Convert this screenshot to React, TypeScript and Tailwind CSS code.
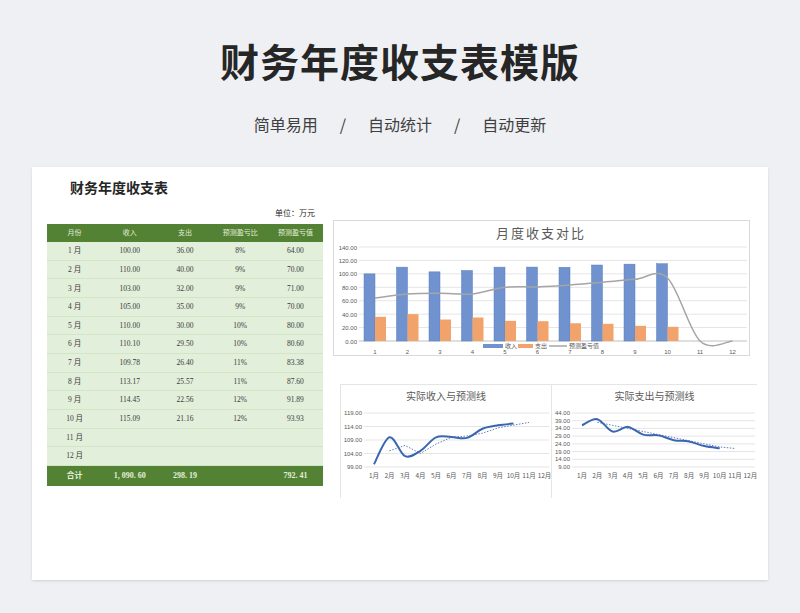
import React from "react";

const rows = [
  ["1 月", "100.00", "36.00", "8%", "64.00"],
  ["2 月", "110.00", "40.00", "9%", "70.00"],
  ["3 月", "103.00", "32.00", "9%", "71.00"],
  ["4 月", "105.00", "35.00", "9%", "70.00"],
  ["5 月", "110.00", "30.00", "10%", "80.00"],
  ["6 月", "110.10", "29.50", "10%", "80.60"],
  ["7 月", "109.78", "26.40", "11%", "83.38"],
  ["8 月", "113.17", "25.57", "11%", "87.60"],
  ["9 月", "114.45", "22.56", "12%", "91.89"],
  ["10 月", "115.09", "21.16", "12%", "93.93"],
  ["11 月", "", "", "", ""],
  ["12 月", "", "", "", ""],
];
const inc = [100, 110, 103, 105, 110, 110.1, 109.78, 113.17, 114.45, 115.09];
const exp = [36, 40, 32, 35, 30, 29.5, 26.4, 25.57, 22.56, 21.16];
const prof = [64, 70, 71, 70, 80, 80.6, 83.38, 87.6, 91.89, 93.93];

function smooth(pts: [number, number][]) {
  let d = `M${pts[0][0]},${pts[0][1]}`;
  for (let i = 0; i < pts.length - 1; i++) {
    const p0 = pts[i - 1] || pts[i], p1 = pts[i], p2 = pts[i + 1], p3 = pts[i + 2] || p2;
    const c1x = p1[0] + (p2[0] - p0[0]) / 6, c1y = p1[1] + (p2[1] - p0[1]) / 6;
    const c2x = p2[0] - (p3[0] - p1[0]) / 6, c2y = p2[1] - (p3[1] - p1[1]) / 6;
    d += ` C${c1x},${c1y} ${c2x},${c2y} ${p2[0]},${p2[1]}`;
  }
  return d;
}

const serif = { fontFamily: '"Liberation Serif","Noto Sans CJK SC",serif' };

function BarChart() {
  const y0 = 121, k = 94 / 140, cx = (i: number) => 42 + i * 32.5;
  const yy = (v: number) => y0 - v * k;
  const pp: [number, number][] = prof.map((v, i) => [cx(i), yy(v)]);
  pp.push([cx(10), y0], [cx(11), y0]);
  return (
    <svg width="417" height="136" className="block">
      <rect x="0.5" y="0.5" width="416" height="135" fill="#fff" stroke="#d9d9d9" />
      <text x="208" y="18" textAnchor="middle" fontSize="13" fill="#595959" letterSpacing="2" fontFamily="Noto Sans CJK SC,sans-serif">月度收支对比</text>
      {[0, 20, 40, 60, 80, 100, 120, 140].map((v) => (
        <g key={v}>
          <line x1="26" x2="414" y1={yy(v)} y2={yy(v)} stroke={v === 0 ? "#bfbfbf" : "#e5e5e5"} />
          <text x="24" y={yy(v) + 2.5} fontSize="6" textAnchor="end" fill="#595959" fontFamily="Liberation Sans,sans-serif">{v.toFixed(2)}</text>
        </g>
      ))}
      {inc.map((v, i) => (
        <rect key={"i" + i} x={cx(i) - 11} y={yy(v)} width="11" height={v * k} fill="#7092ce" stroke="#5b7fbf" strokeWidth="0.5" />
      ))}
      {exp.map((v, i) => (
        <rect key={"e" + i} x={cx(i)} y={yy(v)} width="11" height={v * k} fill="#f2a36b" />
      ))}
      <path d={smooth(pp)} fill="none" stroke="#a5a5a5" strokeWidth="1.5" />
      {Array.from({ length: 12 }).map((_, i) => (
        <text key={i} x={cx(i)} y="134" fontSize="6" textAnchor="middle" fill="#595959" fontFamily="Liberation Sans,sans-serif">{i + 1}</text>
      ))}
      <rect x="150" y="124" width="20" height="4" fill="#7092ce" />
      <text x="172" y="128" fontSize="6" fill="#595959">收入</text>
      <rect x="185" y="124" width="15" height="4" fill="#f2a36b" />
      <text x="202" y="128" fontSize="6" fill="#595959">支出</text>
      <line x1="216" x2="234" y1="126" y2="126" stroke="#a5a5a5" strokeWidth="1.5" />
      <text x="236" y="128" fontSize="6" fill="#595959">预测盈亏值</text>
    </svg>
  );
}

function LineChart({ title, data, trend, min, max, step, x0, dx, w }: any) {
  const top = 28, bot = 82;
  const yy = (v: number) => bot - ((v - min) / (max - min)) * (bot - top);
  const ticks: number[] = [];
  for (let v = min; v <= max + 0.01; v += step) ticks.push(v);
  const pts: [number, number][] = data.map((v: number, i: number) => [x0 + i * dx, yy(v)]);
  const tp = trend.map((v: number, i: number) => `${x0 + (i + 1) * dx},${yy(v)}`).join(" ");
  return (
    <svg width={w} height="113" className="block">
      <text x={w / 2} y="15" textAnchor="middle" fontSize="10" fill="#595959" fontFamily="Noto Sans CJK SC,sans-serif">{title}</text>
      {ticks.map((v) => (
        <g key={v}>
          <line x1={x0 - 10} x2={w - 2} y1={yy(v)} y2={yy(v)} stroke="#e5e5e5" />
          <text x={x0 - 12} y={yy(v) + 2} fontSize="6" textAnchor="end" fill="#595959" fontFamily="Liberation Sans,sans-serif">{v.toFixed(2)}</text>
        </g>
      ))}
      <polyline points={tp} fill="none" stroke="#5b7fbf" strokeWidth="1" strokeDasharray="1.5 1.5" />
      <path d={smooth(pts)} fill="none" stroke="#3a66b0" strokeWidth="2" />
      {Array.from({ length: 12 }).map((_, i) => (
        <text key={i} x={x0 + i * dx} y="93" fontSize="6.5" textAnchor="middle" fill="#595959" fontFamily="Noto Sans CJK SC,sans-serif">{i + 1}月</text>
      ))}
    </svg>
  );
}

export default function App() {
  return (
    <div className="w-[800px] h-[613px] bg-[#eef0f3] flex flex-col items-center" style={{ fontFamily: '"Noto Sans CJK SC",sans-serif' }}>
      <h1 className="mt-[35px] text-[39px] leading-[50px] font-bold text-[#262626] tracking-[1px]">财务年度收支表模版</h1>
      <div className="mt-[27px] flex items-center gap-[22px] text-[16px] text-[#404040] leading-[24px]">
        <span>简单易用</span><span>/</span><span>自动统计</span><span>/</span><span>自动更新</span>
      </div>
      <div className="mt-[31px] w-[736px] h-[413px] bg-white shadow-sm flex flex-col">
        <div className="pl-[38px] pt-[10px] text-[14px] font-bold text-[#262626] leading-[20px]">财务年度收支表</div>
        <div className="flex mt-[12px]">
          <div className="ml-[15px] w-[276px]" style={serif}>
            <div className="text-right text-[8px] leading-[10px] pr-[8px] text-[#262626] mb-[5px]">单位：万元</div>
            <div className="grid grid-cols-5 h-[18px] items-center bg-[#548235] text-[7px] text-[#e2efda] text-center">
              <span>月份</span><span>收入</span><span>支出</span><span>预测盈亏比</span><span>预测盈亏值</span>
            </div>
            {rows.map((r) => (
              <div key={r[0]} className="grid grid-cols-5 h-[18.67px] items-center bg-[#e2efda] border-b border-[#d3e4c7] text-[7.5px] text-[#3a3a3a] text-center">
                {r.map((c, j) => <span key={j}>{c}</span>)}
              </div>
            ))}
            <div className="grid grid-cols-5 h-[20px] items-center bg-[#548235] text-[8px] font-bold text-[#e2efda] text-center">
              <span>合计</span><span>1, 090. 60</span><span>298. 19</span><span></span><span>792. 41</span>
            </div>
          </div>
          <div className="ml-[10px] flex flex-col">
            <div className="mt-[11px]"><BarChart /></div>
            <div className="mt-[28px] ml-[7px] flex border-t border-l border-[#e5e5e5]">
              <div className="border-r border-[#e5e5e5]">
                <LineChart w={210} title="实际收入与预测线" data={inc} trend={[105, 107, 104, 107.5, 110, 110.5, 111.5, 113.5, 114.5, 115.5]} min={99} max={119} step={5} x0={33} dx={15.5} />
              </div>
              <LineChart w={205} title="实际支出与预测线" data={exp} trend={[38, 36, 34, 32, 30, 28, 26, 24, 22, 21]} min={9} max={44} step={5} x0={30} dx={15.3} />
            </div>
          </div>
        </div>
      </div>
    </div>
  );
}
